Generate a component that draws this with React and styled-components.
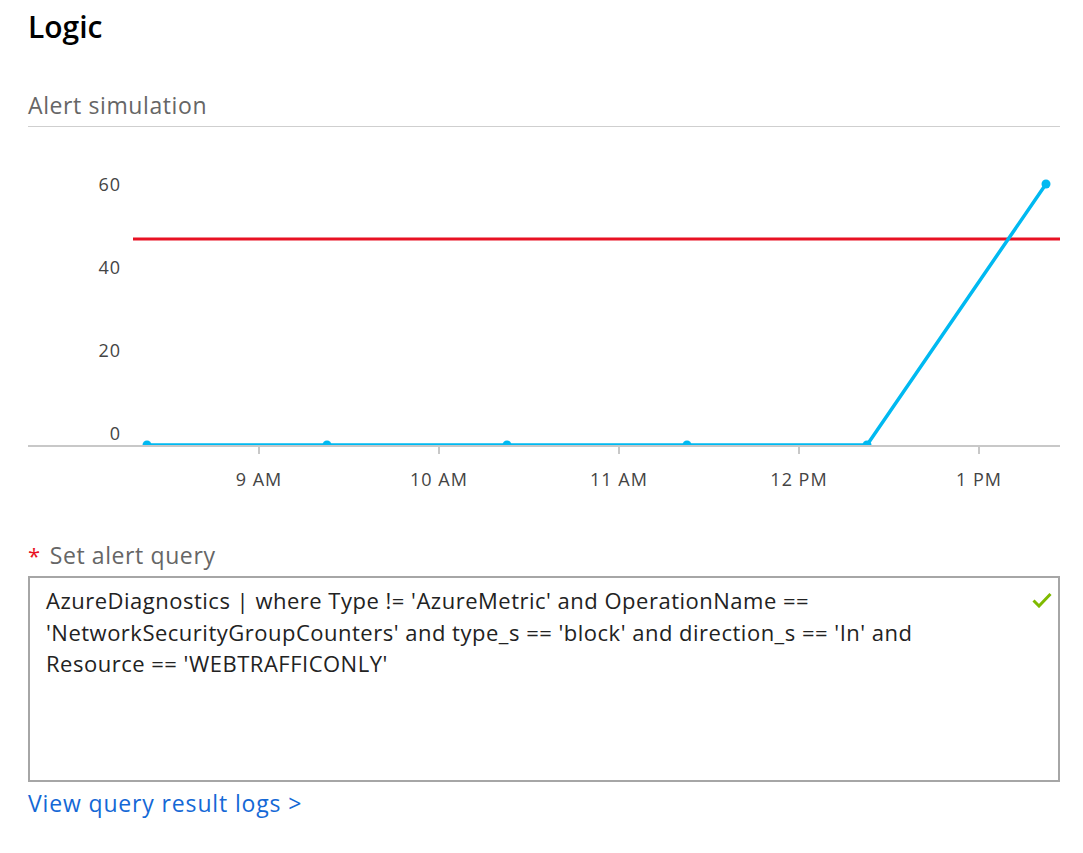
import React from "react";
import styled, { createGlobalStyle } from "styled-components";

const GlobalStyle = createGlobalStyle`
  html, body {
    margin: 0;
    padding: 0;
    background: #fff;
  }
  body {
    font-family: "Open Sans", "Noto Sans", "Liberation Sans", sans-serif;
    color: #222;
  }
`;

const Page = styled.div`
  width: 1032px;
  padding: 6px 0 0 28px;
`;

const Title = styled.h1`
  margin: 0;
  font-size: 30px;
  line-height: 42px;
  font-weight: 600;
  color: #000;
`;

const SectionHeader = styled.div`
  margin-top: 42px;
  padding-bottom: 6px;
  font-size: 23px;
  letter-spacing: 0.6px;
  line-height: 30px;
  color: #666;
  border-bottom: 1px solid #cfcfcf;
`;

const ChartSvg = styled.svg`
  display: block;
  overflow: visible;
`;

const AxisText = styled.text`
  font-family: "Open Sans", "Noto Sans", sans-serif;
  font-size: 18px;
  letter-spacing: 1px;
  fill: #444;
`;

const FieldLabel = styled.div`
  margin-top: 40px;
  display: flex;
  align-items: baseline;
  gap: 9px;
  font-size: 23px;
  letter-spacing: 0.6px;
  line-height: 30px;
  color: #666;
`;

const Required = styled.span`
  color: #e81123;
  font-size: 22px;
`;

const QueryBox = styled.div`
  position: relative;
  margin-top: 6px;
  box-sizing: border-box;
  height: 206px;
  border: 2px solid #a6a6a6;
  padding: 7px 40px 0 16px;
  font-size: 22px;
  letter-spacing: 0.5px;
  line-height: 31.5px;
  color: #222;
  white-space: pre-line;
`;

const Check = styled.svg`
  position: absolute;
  top: 14px;
  right: 6px;
`;

const ResultLink = styled.a`
  display: inline-block;
  margin-top: 6px;
  font-size: 23px;
  letter-spacing: 0.85px;
  line-height: 30px;
  color: #1468d6;
  text-decoration: none;
`;

// chart geometry, in page px minus the chart origin (28, 127)
const OX = 28;
const OY = 127;
const AXIS_Y = 445 - OY;
const yFor = v => AXIS_Y - v * 4.35;

const yLabels = [
  { text: "60", y: 191 },
  { text: "40", y: 274 },
  { text: "20", y: 357 },
  { text: "0", y: 440 }
];

const xTicks = [
  { text: "9 AM", x: 259 },
  { text: "10 AM", x: 439 },
  { text: "11 AM", x: 619 },
  { text: "12 PM", x: 799 },
  { text: "1 PM", x: 979 }
];

const points = [
  { x: 147, v: 0 },
  { x: 327, v: 0 },
  { x: 507, v: 0 },
  { x: 687, v: 0 },
  { x: 867, v: 0 },
  { x: 1046, v: 60 }
];

function AlertChart() {
  const line = points.map(p => `${p.x - OX},${yFor(p.v)}`).join(" ");
  return (
    <ChartSvg width="1032" height="373" viewBox="0 0 1032 373">
      <defs>
        <clipPath id="plot">
          <rect x="0" y="0" width="1032" height={AXIS_Y} />
        </clipPath>
      </defs>
      {yLabels.map(l => (
        <AxisText key={l.text} x={121 - OX} y={l.y - OY} textAnchor="end">
          {l.text}
        </AxisText>
      ))}
      <line x1="0" x2="1032" y1={AXIS_Y + 1} y2={AXIS_Y + 1} stroke="#c8c8c8" strokeWidth="2" />
      {xTicks.map(t => (
        <g key={t.text}>
          <line x1={t.x - OX} x2={t.x - OX} y1={AXIS_Y + 1} y2={AXIS_Y + 9} stroke="#c8c8c8" strokeWidth="2" />
          <AxisText x={t.x - OX} y={486 - OY} textAnchor="middle">
            {t.text}
          </AxisText>
        </g>
      ))}
      <line x1={133 - OX} x2="1032" y1={239 - OY} y2={239 - OY} stroke="#e81123" strokeWidth="3.2" />
      <g clipPath="url(#plot)">
        <polyline points={line} fill="none" stroke="#00b9f1" strokeWidth="3.5" strokeLinejoin="round" />
        {points.map(p => (
          <circle key={p.x} cx={p.x - OX} cy={yFor(p.v)} r="4.5" fill="#00b9f1" />
        ))}
      </g>
    </ChartSvg>
  );
}

export default function App() {
  return (
    <>
      <GlobalStyle />
      <Page>
        <Title>Logic</Title>
        <SectionHeader>Alert simulation</SectionHeader>
        <AlertChart />
        <FieldLabel>
          <Required>*</Required>
          <span>Set alert query</span>
        </FieldLabel>
        <QueryBox>
          {"AzureDiagnostics | where Type != 'AzureMetric' and OperationName ==\n'NetworkSecurityGroupCounters' and type_s == 'block' and direction_s == 'In' and\nResource == 'WEBTRAFFICONLY'"}
          <Check width="20" height="16" viewBox="0 0 20 16">
            <path d="M1.5 8.5 L7 14 L18.5 2" fill="none" stroke="#7fba00" strokeWidth="3" />
          </Check>
        </QueryBox>
        <ResultLink href="#">View query result logs &gt;</ResultLink>
      </Page>
    </>
  );
}
